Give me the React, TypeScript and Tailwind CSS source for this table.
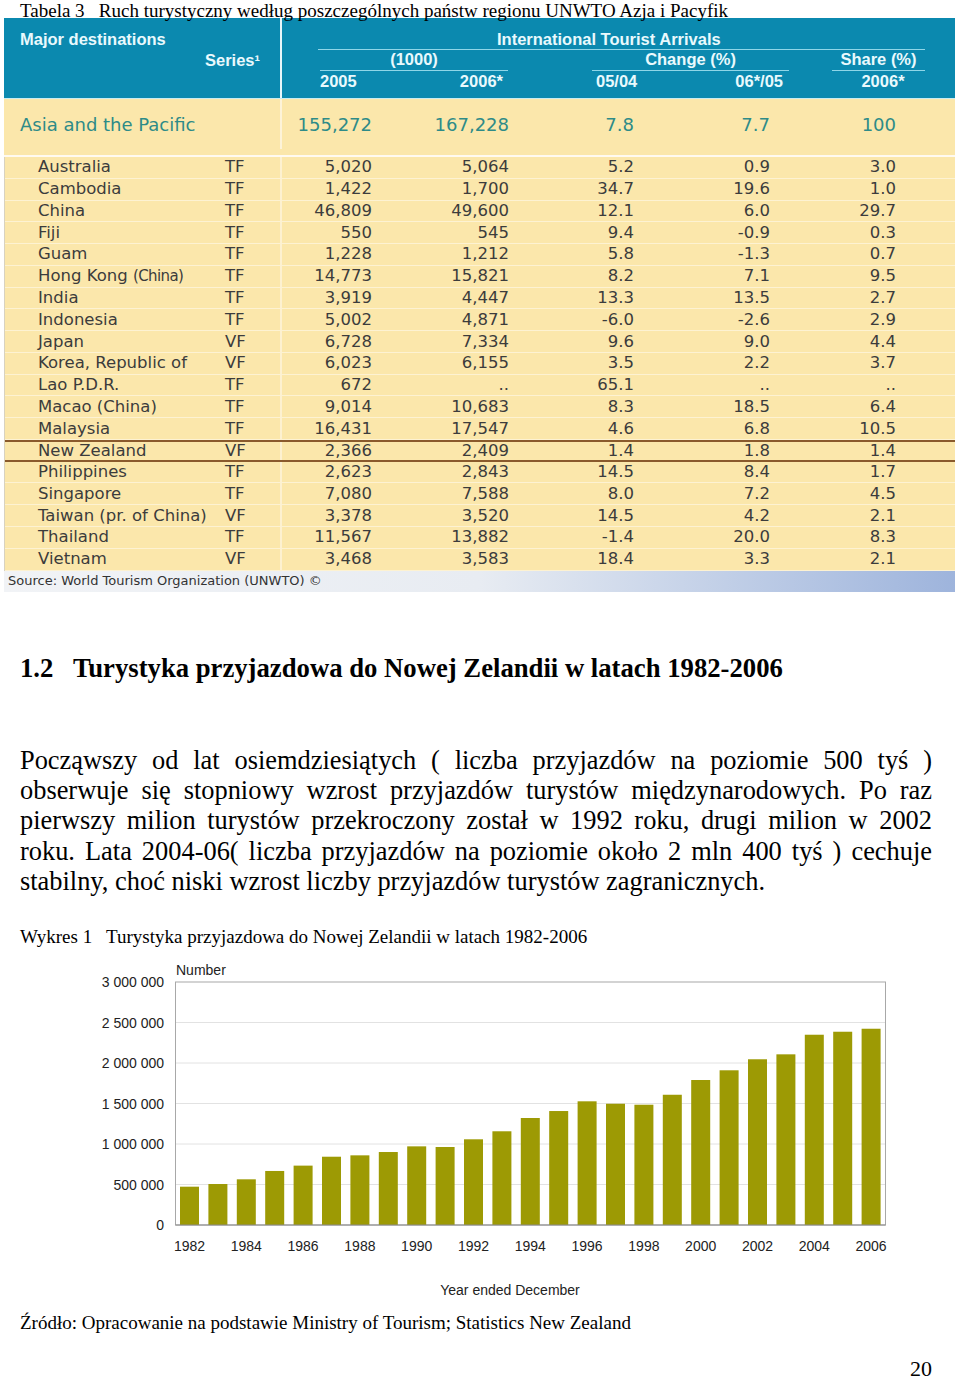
import React from "react";

const serif = "font-['Liberation_Serif','Times_New_Roman',serif]";
const tableFont = "font-['DejaVu_Sans','Verdana',sans-serif]";
const headFont = "font-['Liberation_Sans','Arial',sans-serif]";

const rows: string[][] = [
  ["Australia", "TF", "5,020", "5,064", "5.2", "0.9", "3.0"],
  ["Cambodia", "TF", "1,422", "1,700", "34.7", "19.6", "1.0"],
  ["China", "TF", "46,809", "49,600", "12.1", "6.0", "29.7"],
  ["Fiji", "TF", "550", "545", "9.4", "-0.9", "0.3"],
  ["Guam", "TF", "1,228", "1,212", "5.8", "-1.3", "0.7"],
  ["Hong Kong|(China)", "TF", "14,773", "15,821", "8.2", "7.1", "9.5"],
  ["India", "TF", "3,919", "4,447", "13.3", "13.5", "2.7"],
  ["Indonesia", "TF", "5,002", "4,871", "-6.0", "-2.6", "2.9"],
  ["Japan", "VF", "6,728", "7,334", "9.6", "9.0", "4.4"],
  ["Korea, Republic of", "VF", "6,023", "6,155", "3.5", "2.2", "3.7"],
  ["Lao P.D.R.", "TF", "672", "..", "65.1", "..", ".."],
  ["Macao (China)", "TF", "9,014", "10,683", "8.3", "18.5", "6.4"],
  ["Malaysia", "TF", "16,431", "17,547", "4.6", "6.8", "10.5"],
  ["New Zealand", "VF", "2,366", "2,409", "1.4", "1.8", "1.4"],
  ["Philippines", "TF", "2,623", "2,843", "14.5", "8.4", "1.7"],
  ["Singapore", "TF", "7,080", "7,588", "8.0", "7.2", "4.5"],
  ["Taiwan (pr. of China)", "VF", "3,378", "3,520", "14.5", "4.2", "2.1"],
  ["Thailand", "TF", "11,567", "13,882", "-1.4", "20.0", "8.3"],
  ["Vietnam", "VF", "3,468", "3,583", "18.4", "3.3", "2.1"],
];

const values = [473, 506, 564, 667, 733, 843, 860, 901, 971, 963, 1058, 1157, 1321, 1407, 1527, 1497, 1485, 1608, 1790, 1910, 2046, 2107, 2349, 2386, 2423];

function NumCells({ v, cls }: { v: string[]; cls: string }) {
  const widths = ["w-[90px]", "w-[137px]", "w-[125px]", "w-[136px]", "w-[126px]"];
  return (
    <div className="flex">
      {v.map((x, i) => (
        <div key={i} className={`${widths[i]} shrink-0 text-right ${cls}`}>
          {x}
        </div>
      ))}
    </div>
  );
}

function Country({ name }: { name: string }) {
  if (name.includes("|")) {
    const [a, b] = name.split("|");
    return (
      <span>
        {a} <span className="text-[15px] tracking-[-0.6px]">{b}</span>
      </span>
    );
  }
  return <span>{name}</span>;
}

function Table() {
  return (
    <div className="ml-[4px] w-[951px]">
      {/* header */}
      <div className={`flex h-[80px] bg-[#0b89af] text-[#e9f9fd] ${headFont} font-bold text-[16.5px] leading-[18px]`}>
        <div className="w-[276px] shrink-0 pt-[12px]">
          <div className="pl-[16px]">Major destinations</div>
          <div className="mt-[3px] pr-[20px] text-right">Series¹</div>
        </div>
        <div className="w-[2px] shrink-0 bg-[#e8f6fa]" />
        <div className="flex-1 pt-[12px]">
          <div className="pl-[215px]">International Tourist Arrivals</div>
          <div className="ml-[36px] mt-px h-px w-[607px] bg-[#8fd6e8]" />
          <div className="flex">
            <div className="ml-[38px] w-[188px]">
              <div className="border-b border-[#8fd6e8] pb-[2px] text-center">(1000)</div>
              <div className="flex justify-between pr-[5px] pt-px">
                <span>2005</span>
                <span>2006*</span>
              </div>
            </div>
            <div className="ml-[84px] w-[197px]">
              <div className="border-b border-[#8fd6e8] pb-[2px] text-center">Change (%)</div>
              <div className="flex justify-between pl-[4px] pr-[6px] pt-px">
                <span>05/04</span>
                <span>06*/05</span>
              </div>
            </div>
            <div className="ml-[43px] w-[93px]">
              <div className="border-b border-[#8fd6e8] pb-[2px] text-center">Share (%)</div>
              <div className="pl-[9px] pt-px text-center">2006*</div>
            </div>
          </div>
        </div>
      </div>
      <div className="h-[1px] bg-[#c9ecf1]" />
      {/* Asia row */}
      <div className={`flex h-[56px] items-center bg-[#fbe7ab] pb-[6px] text-[18px] text-[#2e8b88] ${tableFont}`}>
        <div className="w-[276px] shrink-0 pl-[16px]">Asia and the Pacific</div>
        <div className="h-full w-[2px] shrink-0 bg-[#fdf3d8]" />
        <NumCells v={["155,272", "167,228", "7.8", "7.7", "100"]} cls="" />
      </div>
      <div className="h-[2px] bg-[#fffaf0]" />
      {/* rows */}
      <div className={`${tableFont} text-[16.5px] text-[#3c3c3c] border-l border-[#d8d2c0]`}>
        {rows.map((r, i) => {
          const nz = r[0] === "New Zealand";
          return (
            <div
              key={i}
              className={`flex h-[21.78px] items-center bg-[#fbe7ab] leading-[20px] ${
                nz ? "border-y-2 border-[#8a5a2c]" : "border-b border-[#fdf2d2]"
              }`}
            >
              <div className="flex w-[275px] shrink-0 pl-[33px]">
                <div className="w-[187px] shrink-0 whitespace-nowrap">
                  <Country name={r[0]} />
                </div>
                <div>{r[1]}</div>
              </div>
              <div className="h-full w-[2px] shrink-0 bg-[#fdf1d0]" />
              <NumCells v={r.slice(2)} cls="" />
            </div>
          );
        })}
      </div>
      <div
        className={`flex h-[21px] items-center bg-gradient-to-r from-[#f1f3f6] via-[#e8ecf2] to-[#9eb4dc] pl-[4px] text-[13px] text-[#333] ${tableFont}`}
      >
        Source: World Tourism Organization (UNWTO) ©
      </div>
    </div>
  );
}

function Chart() {
  const top = 32;
  const bottom = 275;
  const left = 175.5;
  const width = 710;
  const step = 40.5;
  const yLabels = ["3 000 000", "2 500 000", "2 000 000", "1 500 000", "1 000 000", "500 000", "0"];
  return (
    <svg width={960} height={355} className="block" fontFamily="'Liberation Sans', Arial, sans-serif" fontSize={14}>
      {yLabels.map((l, i) => (
        <text key={l} x={164} y={top + i * step + 5} textAnchor="end" fill="#222">
          {l}
        </text>
      ))}
      <text x={176} y={25} fill="#222">
        Number
      </text>
      {[1, 2, 3, 4, 5].map((i) => (
        <line key={i} x1={left} x2={left + width} y1={top + i * step} y2={top + i * step} stroke="#e2e2e2" strokeWidth={1} />
      ))}
      <rect x={left} y={top} width={width} height={bottom - top} fill="none" stroke="#a8a8a8" strokeWidth={1} />
      {values.map((v, i) => {
        const h = (v / 1000) * 81;
        return <rect key={i} x={180 + i * 28.4} y={bottom - h} width={19} height={h} fill="#9d9a04" />;
      })}
      <line x1={left} x2={left + width} y1={bottom} y2={bottom} stroke="#8a8a8a" strokeWidth={1} />
      {values.map((_, i) =>
        i % 2 === 0 ? (
          <text key={i} x={189.5 + i * 28.4} y={301} textAnchor="middle" fill="#222">
            {1982 + i}
          </text>
        ) : null
      )}
      <text x={510} y={345} textAnchor="middle" fill="#222">
        Year ended December
      </text>
    </svg>
  );
}

const bodyLines = [
  "Począwszy od lat osiemdziesiątych ( liczba przyjazdów na poziomie 500 tyś )",
  "obserwuje się stopniowy wzrost przyjazdów turystów międzynarodowych. Po raz",
  "pierwszy milion turystów przekroczony został w 1992 roku, drugi milion w 2002",
  "roku. Lata 2004-06( liczba przyjazdów na poziomie około 2 mln 400 tyś ) cechuje",
];

export default function App() {
  return (
    <div className={`relative h-[1381px] w-[960px] overflow-hidden bg-white text-black ${serif}`}>
      <div className="h-[18px] pl-[20px] text-[19px] leading-[21px] whitespace-pre">
        {"Tabela 3   Ruch turystyczny według poszczególnych państw regionu UNWTO Azja i Pacyfik"}
      </div>
      <Table />
      <div className="mt-[61px] h-[30px] pl-[20px] text-[26.7px] font-bold leading-[30px] whitespace-pre">
        {"1.2   Turystyka przyjazdowa do Nowej Zelandii w latach 1982-2006"}
      </div>
      <div className="mt-[62px] w-[912px] ml-[20px] text-[26.4px] leading-[30.4px]">
        {bodyLines.map((l) => (
          <div key={l} className="text-justify [text-align-last:justify]">
            {l}
          </div>
        ))}
        <div>stabilny, choć niski wzrost liczby przyjazdów turystów zagranicznych.</div>
      </div>
      <div className="mt-[30px] h-[20px] pl-[20px] text-[19px] leading-[20px] whitespace-pre">
        {"Wykres 1   Turystyka przyjazdowa do Nowej Zelandii w latach 1982-2006"}
      </div>
      <div className="mt-[3px]">
        <Chart />
      </div>
      <div className="mt-[7px] h-[22px] pl-[20px] text-[19px] leading-[22px]">
        Źródło: Opracowanie na podstawie Ministry of Tourism; Statistics New Zealand
      </div>
      <div className="mt-[24px] h-[22px] pr-[28px] text-right text-[22px] leading-[22px]">20</div>
    </div>
  );
}
